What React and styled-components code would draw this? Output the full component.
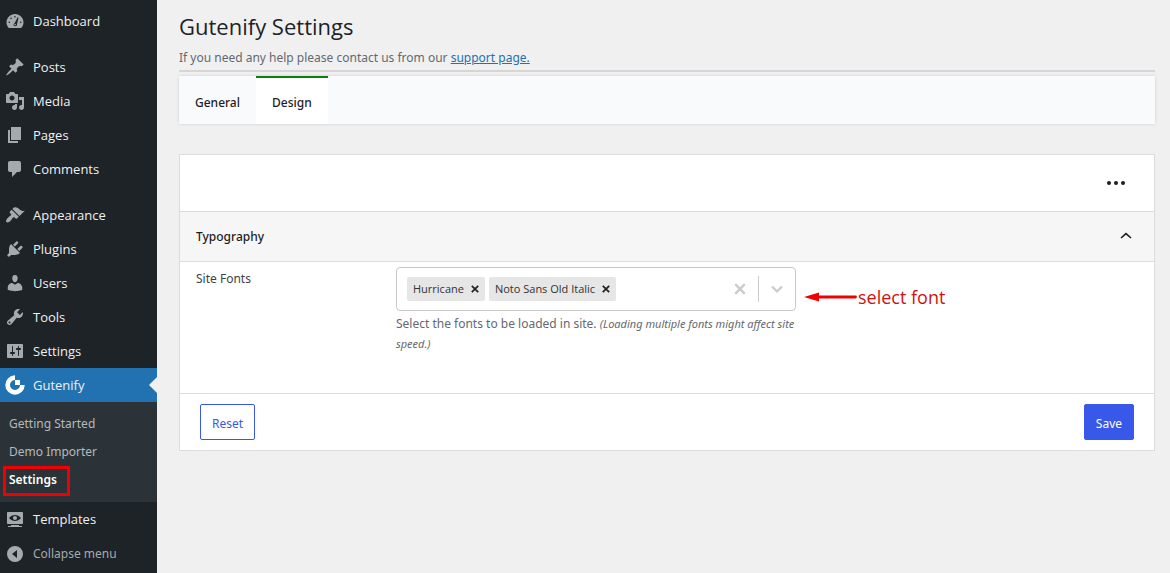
import React from "react";
import styled, { createGlobalStyle, css } from "styled-components";

const GlobalStyle = createGlobalStyle`
  *, *::before, *::after { box-sizing: border-box; }
  body {
    margin: 0;
    background: #f0f0f1;
    color: #3c434a;
    font-family: "Noto Sans", "Open Sans", sans-serif;
    font-size: 12px;
    line-height: 20px;
  }
  button, input { font: inherit; color: inherit; }
  button { cursor: pointer; }
`;

const Layout = styled.div`
  display: flex;
  min-height: 100vh;
`;

/* Sidebar */
const Sidebar = styled.nav`
  flex: 0 0 157px;
  padding-top: 4px;
  background: #1d2327;
`;

const MenuList = styled.ul`
  margin: 0;
  padding: 0;
  list-style: none;
`;

const Separator = styled.li`
  height: 12px;
`;

const menuRow = css`
  position: relative;
  display: flex;
  align-items: center;
  gap: 8px;
  width: 100%;
  height: 34px;
  padding: 0 5px;
  border: 0;
  color: #f0f0f1;
  text-decoration: none;
`;

const MenuLink = styled.a`
  ${menuRow}
  background: ${(p) => (p.$active ? "#2271b1" : "transparent")};
  font-family: "Open Sans", "Noto Sans", sans-serif;
  font-size: 13px;

  &::after {
    content: ${(p) => (p.$active ? '""' : "none")};
    position: absolute;
    right: 0;
    border: 8px solid transparent;
    border-right-color: #f0f0f1;
  }
`;

const CollapseButton = styled.button`
  ${menuRow}
  padding-top: 2px;
  background: none;
  color: #a7aaad;
`;

const Icon = styled.svg`
  flex: none;
  width: 20px;
  height: 20px;
  fill: ${(p) => (p.$active ? "#ffffff" : "#a7aaad")};
`;

const SubMenu = styled.ul`
  margin: 0;
  padding: 8px 0;
  list-style: none;
  background: #2c3338;
`;

const SubLink = styled.a`
  position: relative;
  display: block;
  padding: 4px 9px;
  color: ${(p) => (p.$current ? "#ffffff" : "#b4b9be")};
  font-weight: ${(p) => (p.$current ? 600 : 400)};
  text-decoration: none;
`;

const RedFrame = styled.span`
  position: absolute;
  top: 0;
  left: 3px;
  width: 67px;
  height: 30px;
  border: 3px solid #f00005;
`;

/* Page */
const Main = styled.main`
  flex: 1;
  min-width: 0;
  padding: 11px 15px 40px 22px;
`;

const Title = styled.h1`
  margin: 0;
  color: #1d2327;
  font-family: "Open Sans", "Noto Sans", sans-serif;
  font-size: 22px;
  font-weight: 400;
  line-height: 30px;
`;

const Intro = styled.p`
  margin: 0;
  padding: 7px 0 2px;
  border-bottom: 2px solid #d6d6d8;
  color: #646970;

  a { color: #2271b1; }
`;

const Tabs = styled.div`
  display: flex;
  margin-top: 4px;
  background: #f9fafc;
  box-shadow: 0 0 3px rgba(0, 0, 0, 0.14);
`;

const Tab = styled.button`
  height: 48px;
  padding: 3px 16px 0;
  border: 0;
  border-top: 2px solid ${(p) => (p.$active ? "#0a7d0a" : "transparent")};
  background: ${(p) => (p.$active ? "#ffffff" : "transparent")};
  color: #1e1e1e;
  font-weight: 500;
`;

const Card = styled.section`
  margin-top: 30px;
  border: 1px solid #dcdcde;
  background: #ffffff;
`;

const CardTop = styled.header`
  display: flex;
  justify-content: flex-end;
  align-items: center;
  height: 56px;
  padding: 0 26px;
`;

const IconButton = styled.button`
  display: flex;
  padding: 0;
  border: 0;
  background: none;
`;

const PanelToggle = styled.button`
  display: flex;
  justify-content: space-between;
  align-items: center;
  width: 100%;
  height: 51px;
  padding: 1px 20px 0 16px;
  border: 1px solid #dcdcde;
  border-width: 1px 0;
  background: #f6f6f7;
  color: #1e1e1e;
  font-weight: 500;
`;

const SettingRow = styled.div`
  display: flex;
  align-items: flex-start;
  min-height: 131px;
  padding: 5px 16px 0;
`;

const SettingLabel = styled.label`
  flex: 0 0 200px;
  padding-top: 2px;
`;

const Field = styled.div`
  flex: 0 1 400px;
  min-width: 0;
`;

const SelectBox = styled.div`
  display: flex;
  align-items: center;
  height: 44px;
  padding: 0 12px 0 10px;
  border: 1px solid #c8c8c8;
  border-radius: 4px;
`;

const Chip = styled.span`
  display: flex;
  align-items: center;
  gap: 7px;
  height: 24px;
  margin-right: 4px;
  padding: 0 6px;
  border-radius: 2px;
  background: #e6e6e6;
  color: #333333;
  font-family: "Open Sans", "Noto Sans", sans-serif;
  font-size: 11px;
  white-space: nowrap;
`;

const SearchInput = styled.input`
  flex: 1;
  min-width: 0;
  padding: 0;
  border: 0;
  outline: 0;
  background: none;
`;

const Divider = styled.span`
  width: 1px;
  height: 26px;
  margin: 0 12px;
  background: #cccccc;
`;

const Help = styled.p`
  margin: 3px 0 0;
  color: #646970;

  em { font-size: 11px; }
`;

const Callout = styled.div`
  display: flex;
  align-items: center;
  gap: 1px;
  margin: 20px 0 0 8px;
  color: #d01010;
  font-family: "Open Sans", "Noto Sans", sans-serif;
  font-size: 18px;
  white-space: nowrap;
`;

const CardFooter = styled.footer`
  display: flex;
  justify-content: space-between;
  align-items: center;
  height: 57px;
  padding: 0 20px;
  border-top: 1px solid #dcdcde;
`;

const Button = styled.button`
  height: 36px;
  padding: 3px 11px 0;
  border: 1px solid #3858e9;
  border-radius: 2px;
  background: ${(p) => (p.$primary ? "#3858e9" : "#ffffff")};
  color: ${(p) => (p.$primary ? "#ffffff" : "#3858e9")};
`;

const icons = {
  dashboard: "M3.76 17h12.48c1.34-1.42 2.26-3.36 2.26-5.5 0-4.69-3.81-8.5-8.5-8.5S1.5 6.81 1.5 11.5c0 2.14.92 4.08 2.26 5.5zM10 4.9a.8.8 0 1 1 0 1.6a.8.8 0 1 1 0-1.6zM6 6.5a.8.8 0 1 1 0 1.6a.8.8 0 1 1 0-1.6zM4.3 10.4a.8.8 0 1 1 0 1.6a.8.8 0 1 1 0-1.6zM15.7 10.4a.8.8 0 1 1 0 1.6a.8.8 0 1 1 0-1.6zM12.7 6.3l.8.5-1.5 6.5c.2 1.2-.6 2-1.8 2s-2-1.1-1.5-2.2c.3-.5.6-.8 1-1zM10.2 12.8a.8.8 0 1 0 0 1.6a.8.8 0 1 0 0-1.6z",
  posts: "M10.44 3.02l1.82-1.82 6.36 6.35-1.83 1.82c-1.05-.68-2.48-.57-3.41.36l-.75.75c-.92.93-1.04 2.35-.35 3.41l-1.83 1.82-2.41-2.41-2.8 2.79c-.42.42-3.38 2.71-3.8 2.29s1.86-3.39 2.28-3.81l2.79-2.79L4.1 9.36l1.83-1.82c1.05.69 2.48.57 3.4-.36l.75-.75c.93-.92 1.05-2.35.36-3.41z",
  media: "M13 11V4c0-.55-.45-1-1-1h-1.67L9 1H5L3.67 3H2c-.55 0-1 .45-1 1v7c0 .55.45 1 1 1h10c.55 0 1-.45 1-1zM7 4.5c1.38 0 2.5 1.12 2.5 2.5S8.38 9.5 7 9.5 4.5 8.38 4.5 7 5.62 4.5 7 4.5zM14 6h5v10.5c0 1.38-1.12 2.5-2.5 2.5S14 17.88 14 16.5s1.12-2.5 2.5-2.5c.17 0 .34.02.5.05V9h-3V6zm-4 8.05V13h2v3.5c0 1.38-1.12 2.5-2.5 2.5S7 17.88 7 16.5 8.12 14 9.5 14c.17 0 .34.02.5.05z",
  pages: "M6 15V2h10v13H6zm-1 1h8v2H3V5h2v11z",
  comments: "M5 2h9c1.1 0 2 .9 2 2v7c0 1.1-.9 2-2 2h-2l-5 5v-5H5c-1.1 0-2-.9-2-2V4c0-1.1.9-2 2-2z",
  appearance: "M14.48 11.06L7.41 3.99l1.5-1.5c.5-.56 2.3-.47 3.51.32 1.21.8 1.43 1.28 2.91 2.1 1.18.64 2.45 1.26 4.45.85zm-.71.71L6.7 4.7 4.93 6.47c-.39.39-.39 1.02 0 1.41l1.06 1.06c.39.39.39 1.03 0 1.42-.6.6-1.43 1.11-2.21 1.69-.35.26-.7.53-1.01.84C1.43 14.23.4 16.08 1.4 17.07c.99 1 2.84-.03 4.18-1.36.31-.31.58-.66.85-1.02.57-.78 1.08-1.61 1.69-2.21.39-.39 1.02-.39 1.41 0l1.06 1.06c.39.39 1.02.39 1.41 0z",
  plugins: "M13.11 4.36L9.87 7.6 8 5.73l3.24-3.24c.35-.34 1.05-.2 1.56.32.52.51.66 1.21.31 1.55zm-8 1.77l.91-1.12 9.01 9.01-1.19.84c-.71.71-2.63 1.16-3.82 1.16H6.14L4.9 17.26c-.59.59-1.54.59-2.12 0-.59-.58-.59-1.53 0-2.12l1.24-1.24v-3.88c0-1.13.4-3.19 1.09-3.89zm7.26 3.97l3.24-3.24c.34-.35 1.04-.21 1.55.31.52.51.66 1.21.31 1.55l-3.24 3.25z",
  users: "M10 9.25c-2.27 0-2.73-3.44-2.73-3.44C7 4.02 7.82 2 9.97 2c2.16 0 2.98 2.02 2.71 3.81 0 0-.41 3.44-2.68 3.44zm0 2.57L12.72 10c2.39 0 4.52 2.33 4.52 4.53v2.49s-3.65 1.13-7.24 1.13c-3.65 0-7.24-1.13-7.24-1.13v-2.49c0-2.25 1.94-4.48 4.47-4.48z",
  tools: "M16.68 9.77c-1.34 1.34-3.3 1.67-4.95.99l-5.41 6.52c-.99.99-2.59.99-3.58 0s-.99-2.59 0-3.57l6.52-5.42c-.68-1.65-.35-3.61.99-4.95 1.28-1.28 3.12-1.62 4.72-1.06l-2.89 2.89 2.82 2.82 2.86-2.87c.53 1.58.18 3.39-1.08 4.65zM3.81 16.21c.4.39 1.04.39 1.43 0 .4-.4.4-1.04 0-1.43-.39-.4-1.03-.4-1.43 0-.39.39-.39 1.03 0 1.43z",
  settings: "M18 16V4c0-.55-.45-1-1-1H3c-.55 0-1 .45-1 1v12c0 .55.45 1 1 1h14c.55 0 1-.45 1-1zM8 11h1c.55 0 1 .45 1 1s-.45 1-1 1H8v1.5c0 .28-.22.5-.5.5s-.5-.22-.5-.5V13H6c-.55 0-1-.45-1-1s.45-1 1-1h1V5.5c0-.28.22-.5.5-.5s.5.22.5.5V11zm5-2h-1c-.55 0-1-.45-1-1s.45-1 1-1h1V5.5c0-.28.22-.5.5-.5s.5.22.5.5V7h1c.55 0 1 .45 1 1s-.45 1-1 1h-1v5.5c0 .28-.22.5-.5.5s-.5-.22-.5-.5V9z",
  gutenify: "M10 0.3A9.7 9.7 0 1 0 19.7 10H15A5 5 0 1 1 10 5ZM10 5h5v5h-5z",
  templates: "M18 14V4c0-.55-.45-1-1-1H3c-.55 0-1 .45-1 1v10c0 .55.45 1 1 1h14c.55 0 1-.45 1-1zm-8-8c2.3 0 4.4 1.14 6 3-1.6 1.86-3.7 3-6 3s-4.4-1.14-6-3c1.6-1.86 3.7-3 6-3zm2 3c0-1.1-.9-2-2-2s-2 .9-2 2 .9 2 2 2 2-.9 2-2zm2 8h3v1H3v-1h3v-1h8v1z",
  collapse: "M10 2a8 8 0 1 0 0 16a8 8 0 1 0 0-16zM12 6v8l-5-4z",
};

const groups = [
  [["dashboard", "Dashboard"]],
  [["posts", "Posts"], ["media", "Media"], ["pages", "Pages"], ["comments", "Comments"]],
  [
    ["appearance", "Appearance"],
    ["plugins", "Plugins"],
    ["users", "Users"],
    ["tools", "Tools"],
    ["settings", "Settings"],
    ["gutenify", "Gutenify"],
    ["templates", "Templates"],
  ],
];

function MenuIcon({ name, active }) {
  return (
    <Icon viewBox="0 0 20 20" $active={active} aria-hidden="true">
      <path fillRule="evenodd" d={icons[name]} />
    </Icon>
  );
}

function MenuItem({ name, label }) {
  const active = name === "gutenify";
  return (
    <li>
      <MenuLink href="#" $active={active}>
        <MenuIcon name={name} active={active} />
        {label}
      </MenuLink>
      {active && (
        <SubMenu>
          <li><SubLink href="#">Getting Started</SubLink></li>
          <li><SubLink href="#">Demo Importer</SubLink></li>
          <li>
            <SubLink href="#" $current aria-current="page">
              Settings
              <RedFrame />
            </SubLink>
          </li>
        </SubMenu>
      )}
    </li>
  );
}

function Cross({ size, color, width }) {
  return (
    <svg width={size} height={size} viewBox="0 0 10 10" fill="none" stroke={color} strokeWidth={width} aria-hidden="true">
      <path d="M1 1l8 8M9 1l-8 8" />
    </svg>
  );
}

function FontChip({ name }) {
  return (
    <Chip>
      {name}
      <IconButton type="button" aria-label={`Remove ${name}`}>
        <Cross size={8} color="#222" width={2.2} />
      </IconButton>
    </Chip>
  );
}

export default function App() {
  return (
    <>
      <GlobalStyle />
      <Layout>
        <Sidebar aria-label="Main menu">
          <MenuList>
            {groups.map((group, i) => (
              <React.Fragment key={i}>
                {i > 0 && <Separator aria-hidden="true" />}
                {group.map(([name, label]) => (
                  <MenuItem key={name} name={name} label={label} />
                ))}
              </React.Fragment>
            ))}
            <li>
              <CollapseButton type="button">
                <MenuIcon name="collapse" />
                Collapse menu
              </CollapseButton>
            </li>
          </MenuList>
        </Sidebar>

        <Main>
          <Title>Gutenify Settings</Title>
          <Intro>
            If you need any help please contact us from our <a href="#">support page.</a>
          </Intro>
          <Tabs role="tablist">
            <Tab type="button" role="tab" aria-selected="false">General</Tab>
            <Tab type="button" role="tab" aria-selected="true" $active>Design</Tab>
          </Tabs>

          <Card>
            <CardTop>
              <IconButton type="button" aria-label="More options">
                <svg width="24" height="24" viewBox="0 0 24 24" fill="#1e1e1e" aria-hidden="true">
                  <circle cx="5" cy="12" r="2" />
                  <circle cx="12" cy="12" r="2" />
                  <circle cx="19" cy="12" r="2" />
                </svg>
              </IconButton>
            </CardTop>
            <PanelToggle type="button" aria-expanded="true">
              Typography
              <svg width="16" height="16" viewBox="0 0 16 16" fill="none" stroke="#1e1e1e" strokeWidth="1.6" aria-hidden="true">
                <path d="M3 9l5-4.4 5 4.4" />
              </svg>
            </PanelToggle>
            <SettingRow>
              <SettingLabel htmlFor="site-fonts">Site Fonts</SettingLabel>
              <Field>
                <SelectBox>
                  <FontChip name="Hurricane" />
                  <FontChip name="Noto Sans Old Italic" />
                  <SearchInput id="site-fonts" type="text" />
                  <IconButton type="button" aria-label="Clear fonts">
                    <Cross size={12} color="#ccc" width={2} />
                  </IconButton>
                  <Divider />
                  <IconButton type="button" aria-label="Show fonts">
                    <svg width="12" height="12" viewBox="0 0 12 12" fill="none" stroke="#ccc" strokeWidth="2.2" aria-hidden="true">
                      <path d="M1 3.6l5 4.8 5-4.8" />
                    </svg>
                  </IconButton>
                </SelectBox>
                <Help>
                  Select the fonts to be loaded in site.{" "}
                  <em>(Loading multiple fonts might affect site speed.)</em>
                </Help>
              </Field>
              <Callout>
                <svg width="53" height="10" viewBox="0 0 53 10" fill="#f00000" aria-hidden="true">
                  <path d="M0 5L15 0.4V3.6H51.5a1.4 1.4 0 0 1 0 2.8H15V9.6z" />
                </svg>
                select font
              </Callout>
            </SettingRow>
            <CardFooter>
              <Button type="button">Reset</Button>
              <Button type="button" $primary>Save</Button>
            </CardFooter>
          </Card>
        </Main>
      </Layout>
    </>
  );
}
